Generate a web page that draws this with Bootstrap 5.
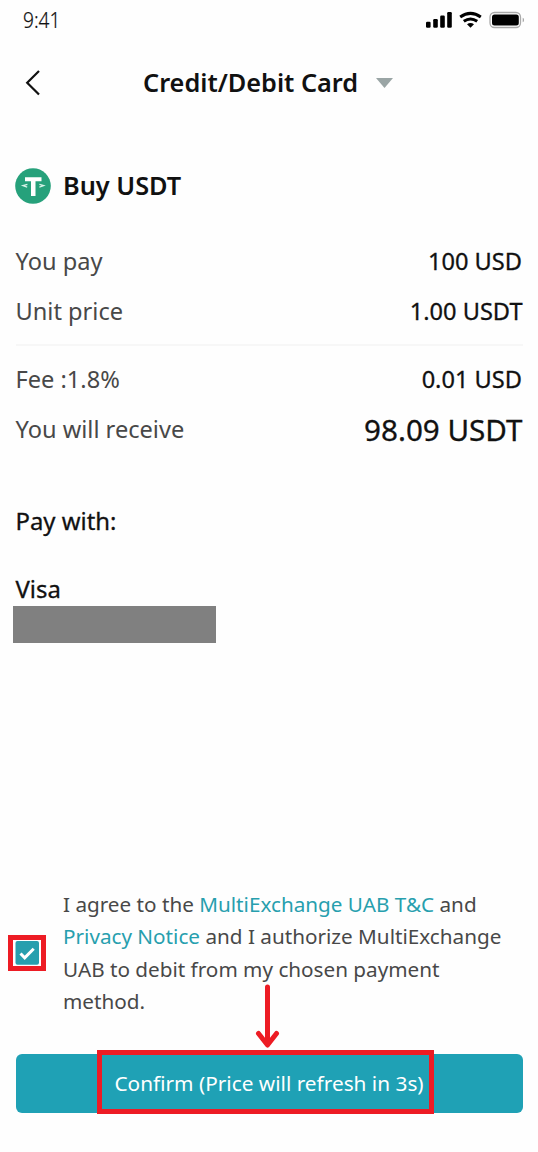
<!DOCTYPE html>
<html lang="en">
<head>
<meta charset="utf-8">
<meta name="viewport" content="width=device-width, initial-scale=1">
<title>Buy USDT</title>
<link href="https://cdn.jsdelivr.net/npm/bootstrap@5.3.0/dist/css/bootstrap.min.css" rel="stylesheet">
<style>
body{font-family:"Noto Sans",sans-serif;background:#fefefe;color:#111;font-size:23.6px;line-height:50px}
.screen{height:1152px;padding:0 15.5px 39.5px;overflow:hidden}
.status{height:40px;margin:0 -1.5px 0 7.5px}
.clock{font-size:21.5px;font-weight:300;line-height:40px;transform:scaleX(.89);transform-origin:left;-webkit-text-stroke:.2px #111}
.topbar{height:86px}
.back{position:absolute;left:8.5px;top:29px}
.heading{font-size:25.3px;font-weight:600;line-height:84px;margin:0 0 2px 127.5px}
.caret{margin-left:17.5px}
.coin-row{height:50px;margin-top:35px;font-size:25.3px;font-weight:600}
.coin-row svg{margin-right:12px;margin-left:-.5px}
.coin-row span{line-height:48px;margin-bottom:2px}
.rows{margin-top:25px}
.label-text{color:#484848}
.value,.total,.method{-webkit-text-stroke:.3px #111}
.value{margin-right:.5px}
.total{font-size:29.6px;position:relative;top:1px}
.method{font-size:23.9px}
.divider{height:2px;background:#f7f7f7;margin:8px 0}
.redacted{width:203px;height:37px;background:#808080;margin-left:-2.5px}
.agree{font-size:20.7px;line-height:32.5px;color:#484848}
.agree a{color:#279fae;text-decoration:none}
.tick-mark{width:38px;height:36px;border:5px solid #ed1c24;background:#fff;margin:0 17px 0 -7.5px}
.confirm-btn{height:59px;background:#1fa1b5;color:#fff;border:0;border-radius:6px;padding:0;font-size:20.8px;line-height:59px}
.confirm-btn:hover{background:#1fa1b5;color:#fff}
.callout{position:absolute;left:81.5px;top:-3.5px;width:337px;height:64px;border:5px solid #ed1c24}
.arrow{position:absolute;left:239.5px;top:-71.5px}
</style>
</head>
<body>
<main class="screen d-flex flex-column">
  <div class="status d-flex justify-content-between align-items-center">
    <span class="clock">9:41</span>
    <svg width="99" height="24" viewBox="425 8 99 24">
      <g fill="#000">
        <rect x="426" y="21.7" width="4.6" height="6" rx="1.2"/>
        <rect x="433.2" y="19" width="4.6" height="8.7" rx="1.2"/>
        <rect x="440.2" y="15.6" width="4.6" height="12.1" rx="1.2"/>
        <rect x="447.2" y="12" width="4.6" height="15.7" rx="1.2"/>
        <path d="M467 24.3q3.500-2.500 7 0l-3.500 3.400z"/>
      </g>
      <g fill="none" stroke="#000" stroke-width="3">
        <path d="M460.200 17q10.300-7.300 20.600 0"/>
        <path d="M463.800 21.300q6.700-4.700 13.400 0"/>
      </g>
      <rect x="490" y="12.500" width="30.500" height="15" rx="4.500" fill="none" stroke="#aaa" stroke-width="1.300"/>
      <rect x="492" y="14.500" width="26.800" height="11" rx="2.500"/>
      <path d="M522.700 17.700q1.500.6 1.500 2.300t-1.500 2.300z" fill="#aaa"/>
    </svg>
  </div>

  <header class="topbar d-flex align-items-center position-relative">
    <svg class="back" width="18" height="28" viewBox="0 0 18 28"><path d="M15 2L3.200 13.700 15 25.500" fill="none" stroke="#111" stroke-width="2.200"/></svg>
    <span class="heading">Credit/Debit Card</span>
    <svg class="caret" width="17" height="10" viewBox="0 0 17 10"><path d="M0 0h17L8.500 10z" fill="#9aa5a5"/></svg>
  </header>

  <div class="coin-row d-flex align-items-center">
    <svg width="36" height="36" viewBox="0 0 36 36">
      <circle cx="18" cy="18" r="17.800" fill="#26a17b"/>
      <path d="M10 9.300h16.500v4h-6v14.700h-4.500v-14.700h-6z" fill="#fff"/>
      <path d="M12.400 16.300L7.800 17.600l4.400 1.500M24.400 16.300l4.400 1.300-4.400 1.500" fill="none" stroke="#d9f2e8" stroke-width="1.200"/>
    </svg>
    <span>Buy USDT</span>
  </div>

  <div class="rows">
    <div class="d-flex justify-content-between"><span class="label-text">You pay</span><span class="value">100 USD</span></div>
    <div class="d-flex justify-content-between"><span class="label-text">Unit price</span><span class="value me-0">1.00 USDT</span></div>
    <div class="divider"></div>
    <div class="d-flex justify-content-between"><span class="label-text">Fee :1.8%</span><span class="value">0.01 USD</span></div>
    <div class="d-flex justify-content-between"><span class="label-text">You will receive</span><span class="total">98.09 USDT</span></div>
  </div>

  <div class="method">
    <div style="margin-top:42px">Pay with:</div>
    <div style="margin-top:18px;height:42px">Visa</div>
    <div class="redacted"></div>
  </div>

  <div class="agree d-flex align-items-center mt-auto">
    <div class="tick-mark flex-shrink-0">
      <svg class="d-block" width="28" height="26" viewBox="0 0 28 26">
        <rect x="2.500" y="1" width="23.500" height="23.800" rx="2" fill="#279fae"/>
        <path d="M7.500 13.500l4.200 4.300 9-9" fill="none" stroke="#fff" stroke-width="3"/>
      </svg>
    </div>
    <div class="text-nowrap">I agree to the <a href="#">MultiExchange UAB T&amp;C</a> and<br><a href="#">Privacy Notice</a> and I authorize MultiExchange<br>UAB to debit from my chosen payment<br>method.</div>
  </div>

  <div class="position-relative" style="margin-top:36px">
    <button type="button" class="btn confirm-btn w-100 d-block">Confirm (Price will refresh in 3s)</button>
    <div class="callout"></div>
    <svg class="arrow" width="26" height="68" viewBox="0 0 26 68"><path d="M12.500 5v57M3.500 51.500l9 11.500 9-11.500" fill="none" stroke="#ed1c24" stroke-width="5" stroke-linecap="round" stroke-linejoin="round"/></svg>
  </div>
</main>
<script src="https://cdn.jsdelivr.net/npm/bootstrap@5.3.0/dist/js/bootstrap.bundle.min.js"></script>
</body>
</html>
